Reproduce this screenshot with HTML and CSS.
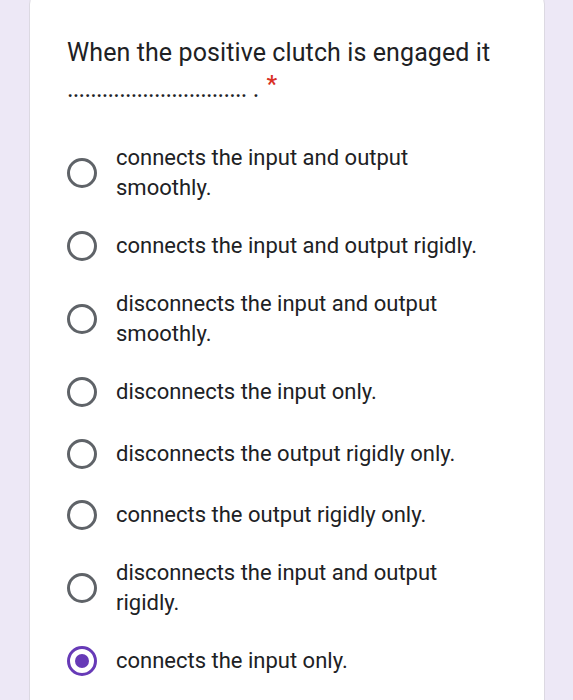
FILE: index.html
```html
<!DOCTYPE html>
<html>
<head>
<meta charset="utf-8">
<link rel="stylesheet" href="styles.css">
</head>
<body>
<div class="card">
  <div class="title">When the positive clutch is engaged it <span class="dots">...............................</span> .<span class="req">*</span></div>
  <div class="options">
    <div class="opt"><span class="radio"></span><span class="label">connects the input and output smoothly.</span></div>
    <div class="opt"><span class="radio"></span><span class="label">connects the input and output rigidly.</span></div>
    <div class="opt"><span class="radio"></span><span class="label">disconnects the input and output smoothly.</span></div>
    <div class="opt"><span class="radio"></span><span class="label">disconnects the input only.</span></div>
    <div class="opt"><span class="radio"></span><span class="label">disconnects the output rigidly only.</span></div>
    <div class="opt"><span class="radio"></span><span class="label">connects the output rigidly only.</span></div>
    <div class="opt"><span class="radio"></span><span class="label">disconnects the input and output rigidly.</span></div>
    <div class="opt"><span class="radio checked"></span><span class="label">connects the input only.</span></div>
  </div>
</div>
</body>
</html>
```
FILE: styles.css
```css
html, body {
  margin: 0;
  padding: 0;
  background: #ede8f6;
  height: 700px;
  overflow: hidden;
}
.card {
  margin: -6px 0 0 29px;
  width: 477px;
  height: 760px;
  background: #fff;
  border: 1px solid #dcd9e2;
  border-radius: 10px;
  padding: 40px 0 0 37px;
}
.title {
  font-family: Roboto, sans-serif;
  font-size: 25px;
  line-height: 36px;
  color: #202124;
  width: 440px;
  letter-spacing: 0.1px;
}
.dots {
  letter-spacing: -0.8px;
}
.req {
  color: #d93025;
  font-size: 24px;
  font-weight: 500;
  vertical-align: top;
  position: relative;
  top: -5px;
  margin-left: 7px;
}
.options {
  display: flex;
  flex-direction: column;
  gap: 24.5px;
  margin-top: 36px;
}
.opt {
  display: flex;
  align-items: center;
  min-height: 37px;
}
.radio {
  flex: none;
  width: 24px;
  height: 24px;
  border: 3px solid #5f6368;
  border-radius: 50%;
  margin-right: 19px;
  box-sizing: content-box;
  display: flex;
  align-items: center;
  justify-content: center;
}
.radio.checked {
  border-color: #673ab7;
}
.radio.checked::after {
  content: "";
  width: 14px;
  height: 14px;
  border-radius: 50%;
  background: #673ab7;
}
.label {
  font-family: Roboto, sans-serif;
  font-size: 22px;
  line-height: 30px;
  color: #202124;
  width: 370px;
}
```
